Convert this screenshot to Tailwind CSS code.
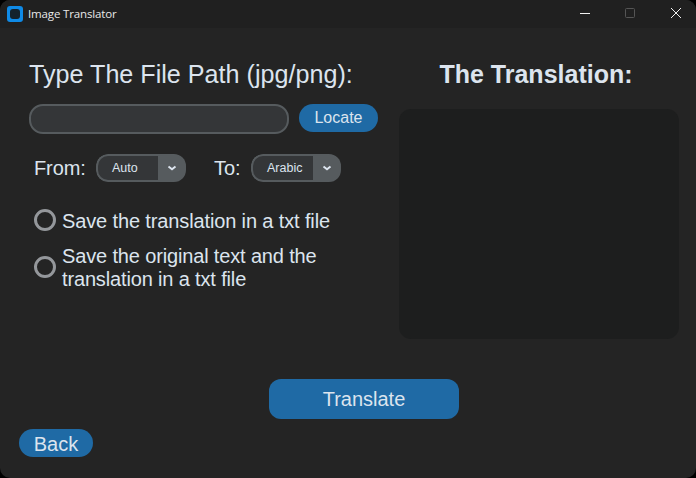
<!DOCTYPE html>
<html lang="en">
<head>
  <meta charset="UTF-8" />
  <title>Image Translator</title>
  <script src="https://cdn.jsdelivr.net/npm/@tailwindcss/browser@4"></script>
</head>
<body class="bg-black">
  <div class="w-[696px] h-[478px] rounded-[10px] overflow-hidden bg-[#242424] flex flex-col font-['Liberation_Sans',Arial,sans-serif] text-[#dce4ee]">
    <!-- title bar -->
    <header class="h-[28px] bg-[#202020] flex items-center shrink-0">
      <svg class="ml-[7px] w-[16px] h-[16px]" viewBox="0 0 16 16">
        <rect width="16" height="16" rx="3" fill="#0f8ae6" />
        <rect x="3" y="3" width="10" height="10" rx="3" fill="#13222c" />
      </svg>
      <span class="ml-[5px] text-[11.5px] tracking-[-0.15px] font-['Open_Sans',sans-serif] text-[#e8e8e8]">Image Translator</span>
      <div class="ml-auto flex items-center h-full">
        <svg class="w-[46px] h-[28px]" viewBox="0 0 46 28"><path d="M22 13.5h10" stroke="#f0f0f0" stroke-width="1" /></svg>
        <svg class="w-[46px] h-[28px]" viewBox="0 0 46 28"><rect x="21.5" y="8.5" width="9" height="9" rx="1" fill="none" stroke="#555" /></svg>
        <svg class="w-[46px] h-[28px]" viewBox="0 0 46 28"><path d="M21 8l10 10M31 8l-10 10" stroke="#f0f0f0" stroke-width="1" /></svg>
      </div>
    </header>

    <main class="flex-1 flex flex-col relative">
      <div class="flex">
        <!-- left column -->
        <section class="w-[399px] pl-[29px] shrink-0">
          <h1 class="mt-[31px] text-[25.15px] leading-[30px] h-[30px]">Type The File Path (jpg/png):</h1>
          <div class="mt-[15px] flex items-start gap-[10px]">
            <input type="text" class="w-[260px] h-[30px] rounded-[14px] border-2 border-[#565b5e] bg-[#343638]" />
            <button class="w-[79px] h-[28px] rounded-[14px] bg-[#1f6aa5] text-[16px]">Locate</button>
          </div>
          <div class="mt-[20px] flex items-center h-[28px] pl-[5px]">
            <span class="text-[20px] w-[62px] tracking-[-0.1px]">From:</span>
            <div class="flex w-[90px] h-[28px] rounded-[12px] overflow-hidden">
              <div class="flex-1 flex items-center pl-[14px] bg-[#343638] border-2 border-r-0 border-[#565b5e] rounded-l-[12px] text-[12.5px]">Auto</div>
              <div class="w-[28px] bg-[#565b5e] flex items-center justify-center">
                <svg class="w-[10px] h-[6px]" viewBox="0 0 10 6"><path d="M1.5 1.5L5 4.2l3.5-2.7" fill="none" stroke="#dce4ee" stroke-width="2" /></svg>
              </div>
            </div>
            <span class="text-[20px] ml-[28px] w-[37px]">To:</span>
            <div class="flex w-[90px] h-[28px] rounded-[12px] overflow-hidden">
              <div class="flex-1 flex items-center pl-[14px] bg-[#343638] border-2 border-r-0 border-[#565b5e] rounded-l-[12px] text-[12.5px]">Arabic</div>
              <div class="w-[28px] bg-[#565b5e] flex items-center justify-center">
                <svg class="w-[10px] h-[6px]" viewBox="0 0 10 6"><path d="M1.5 1.5L5 4.2l3.5-2.7" fill="none" stroke="#dce4ee" stroke-width="2" /></svg>
              </div>
            </div>
          </div>
          <label class="mt-[27px] pl-[5px] flex items-center gap-[6px] text-[20px] leading-[23px] tracking-[-0.13px]">
            <span class="w-[22px] h-[22px] mb-[3px] rounded-full border-[3px] border-[#94979b] shrink-0"></span>
            <span>Save the translation in a txt file</span>
          </label>
          <label class="mt-[11px] pl-[5px] flex items-center gap-[6px] text-[20px] leading-[23px] tracking-[-0.15px]">
            <span class="w-[22px] h-[22px] mb-[2px] rounded-full border-[3px] border-[#94979b] shrink-0"></span>
            <span>Save the original text and the<br />translation in a txt file</span>
          </label>
        </section>

        <!-- right column -->
        <section class="w-[280px] shrink-0">
          <h2 class="mt-[31px] h-[30px] text-[25px] leading-[30px] font-bold text-center pr-[6px]">The Translation:</h2>
          <div class="mt-[20px] h-[230px] rounded-[12px] bg-[#1d1e1e]"></div>
        </section>
      </div>

      <button class="mt-[40px] ml-[269px] w-[190px] h-[40px] rounded-[12px] bg-[#1f6aa5] text-[20px]">Translate</button>
      <button class="mt-[10px] ml-[19px] w-[74px] h-[28px] rounded-[14px] bg-[#1f6aa5] text-[20px]">Back</button>
    </main>
  </div>
</body>
</html>
